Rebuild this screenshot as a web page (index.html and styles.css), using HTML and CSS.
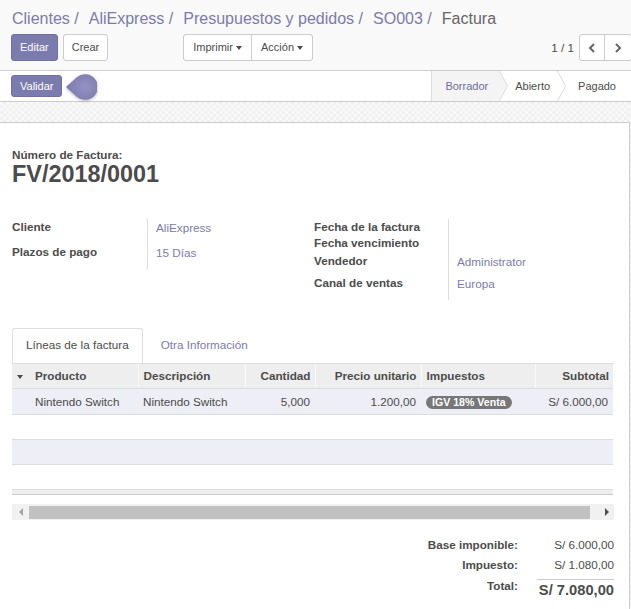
FILE: index.html
```html
<!DOCTYPE html>
<html lang="es">
<head>
<meta charset="utf-8">
<title>Factura</title>
<link rel="stylesheet" href="styles.css">
</head>
<body>
<div class="cp">
  <ol class="crumbs">
    <li><a class="crumb-link">Clientes</a></li><li class="sep">/</li>
    <li><a class="crumb-link">AliExpress</a></li><li class="sep">/</li>
    <li><a class="crumb-link">Presupuestos y pedidos</a></li><li class="sep">/</li>
    <li><a class="crumb-link">SO003</a></li><li class="sep">/</li>
    <li class="crumb-active">Factura</li>
  </ol>
  <div class="cp-row">
    <div class="cp-left">
      <button class="btn btn-primary">Editar</button>
      <button class="btn btn-create">Crear</button>
      <div class="btn-group sidebar">
        <button class="btn">Imprimir<span class="caret"></span></button>
        <button class="btn">Acción<span class="caret"></span></button>
      </div>
    </div>
    <div class="pager">
      <span class="pager-value">1 / 1</span>
      <div class="btn-group">
        <button class="btn pager-btn"><svg width="8" height="10" viewBox="0 0 8 10"><polyline points="6,1 2,5 6,9" fill="none" stroke="#666" stroke-width="2"/></svg></button>
        <button class="btn pager-btn pager-next"><svg width="8" height="10" viewBox="0 0 8 10"><polyline points="2,1 6,5 2,9" fill="none" stroke="#666" stroke-width="2"/></svg></button>
      </div>
    </div>
  </div>
</div>

<div class="statusbar">
  <div class="status-left">
    <button class="btn btn-primary btn-validar">Validar</button>
    <svg class="tip" width="32" height="28" viewBox="0 0 32 28">
      <defs>
        <radialGradient id="tipg" cx="0.6" cy="0.5" r="0.6">
          <stop offset="0" stop-color="#9592c6"/>
          <stop offset="1" stop-color="#7c7bad"/>
        </radialGradient>
      </defs>
      <path d="M1,14 L11.8,4.2 A12.8,12.8 0 1 1 11.8,23.8 Z" fill="url(#tipg)"/>
    </svg>
  </div>
  <div class="steps">
    <div class="step step-current">Borrador</div>
    <svg class="step-sep" width="9" height="30" viewBox="0 0 9 30"><polygon points="0,0 8.5,15 0,30" fill="#f4f4f4"/><polyline points="0.5,0 8.5,15 0.5,30" fill="none" stroke="#dcdcdc" stroke-width="1"/></svg>
    <div class="step step-mid">Abierto</div>
    <svg class="step-sep" width="9" height="30" viewBox="0 0 9 30"><polyline points="0.5,0 8.5,15 0.5,30" fill="none" stroke="#dcdcdc" stroke-width="1"/></svg>
    <div class="step step-last">Pagado</div>
  </div>
</div>

<div class="content">
  <div class="sheet">
    <div class="title-label">Número de Factura:</div>
    <h1 class="title">FV/2018/0001</h1>

    <div class="groups">
      <div class="group group-left">
        <div class="lbl">Cliente</div><div class="val">AliExpress</div>
        <div class="lbl">Plazos de pago</div><div class="val">15 Días</div>
      </div>
      <div class="group group-right">
        <div class="lbl">Fecha de la factura</div><div class="val"></div>
        <div class="lbl">Fecha vencimiento</div><div class="val"></div>
        <div class="lbl">Vendedor</div><div class="val">Administrator</div>
        <div class="lbl">Canal de ventas</div><div class="val">Europa</div>
      </div>
    </div>

    <div class="tabs">
      <div class="tab tab-active">Líneas de la factura</div>
      <div class="tab">Otra Información</div>
    </div>

    <table class="lines">
      <colgroup>
        <col class="c-arrow"><col class="c-prod"><col class="c-desc"><col class="c-qty"><col class="c-price"><col class="c-tax"><col class="c-sub">
      </colgroup>
      <thead>
        <tr>
          <th class="th-arrow"><span class="sort-caret"></span></th>
          <th>Producto</th>
          <th class="sepl">Descripción</th>
          <th class="sepl num">Cantidad</th>
          <th class="sepl num">Precio unitario</th>
          <th class="sepl">Impuestos</th>
          <th class="sepl num">Subtotal</th>
        </tr>
      </thead>
      <tbody>
        <tr class="row-first striped">
          <td></td>
          <td>Nintendo Switch</td>
          <td>Nintendo Switch</td>
          <td class="num">5,000</td>
          <td class="num">1.200,00</td>
          <td><span class="badge">IGV 18% Venta</span></td>
          <td class="num">S/ 6.000,00</td>
        </tr>
        <tr><td colspan="7"></td></tr>
        <tr class="striped"><td colspan="7"></td></tr>
        <tr><td colspan="7"></td></tr>
      </tbody>
      <tfoot>
        <tr><td colspan="7"></td></tr>
      </tfoot>
    </table>

    <div class="hscroll">
      <div class="hs-btn hs-left"><span class="tri-left"></span></div>
      <div class="hs-thumb"></div>
      <div class="hs-space"></div>
      <div class="hs-btn hs-right"><span class="tri-right"></span></div>
    </div>

    <div class="totals">
      <div class="t-lbl">Base imponible:</div><div class="t-val">S/ 6.000,00</div>
      <div class="t-lbl">Impuesto:</div><div class="t-val">S/ 1.080,00</div>
      <div class="t-lbl t-lbl-total">Total:</div><div class="t-val t-total">S/ 7.080,00</div>
    </div>
  </div>
</div>
</body>
</html>
```

FILE: styles.css
```css
html, body {
  margin: 0;
  padding: 0;
}
body {
  font-family: "Liberation Sans", Arial, sans-serif;
  font-size: 11.7px;
  color: #4c4c4c;
  overflow: hidden;
  background-color: #f4f4f4;
  background-image: repeating-conic-gradient(#f1f1f1 0 25%, #f8f8f8 0 50%);
  background-size: 6px 6px;
}

/* control panel */
.cp {
  box-sizing: border-box;
  height: 71px;
  background: #f9f9f9;
  border-bottom: 1px solid #cccccc;
  padding-top: 10px;
}
.crumbs {
  list-style: none;
  margin: 0;
  padding: 0 0 0 12px;
  display: flex;
  font-size: 16px;
  line-height: 18px;
  white-space: nowrap;
}
.crumb-link { color: #7c7bad; }
.sep { color: #7c7bad; padding: 0 10px 0 4.5px; }
.crumb-active { color: #666666; }

.cp-row {
  display: flex;
  justify-content: space-between;
  align-items: center;
  margin-top: 6px;
  padding-left: 11px;
}
.cp-left { display: flex; align-items: center; }

.btn {
  box-sizing: border-box;
  height: 27px;
  font-family: "Liberation Sans", Arial, sans-serif;
  font-size: 11px;
  line-height: 15px;
  padding: 5px 8px;
  margin: 0;
  border: 1px solid #cccccc;
  border-radius: 3px;
  background: #ffffff;
  color: #4c4c4c;
  display: inline-flex;
  align-items: center;
}
.btn-primary {
  background: #7c7bad;
  border-color: #7170a3;
  color: #ffffff;
}
.btn-create { margin-left: 5px; }
.btn-group { display: flex; }
.btn-group .btn { border-radius: 0; }
.btn-group .btn:first-child { border-radius: 3px 0 0 3px; }
.btn-group .btn:last-child { border-radius: 0 3px 3px 0; margin-left: -1px; }
.sidebar { margin-left: 75px; }
.sidebar .btn { padding: 5px 9px; }
.caret {
  display: inline-block;
  width: 0;
  height: 0;
  margin-left: 3px;
  border-top: 4px solid #4c4c4c;
  border-left: 3.5px solid transparent;
  border-right: 3.5px solid transparent;
}

.pager { display: flex; align-items: center; margin-right: -1px; }
.pager-value { margin-right: 5px; font-size: 11.7px; }
.pager-btn { width: 26px; justify-content: center; padding: 0; }
.pager-next { width: 28px; }

/* status bar */
.statusbar {
  box-sizing: border-box;
  height: 31px;
  background: #ffffff;
  border-bottom: 1px solid #cccccc;
  display: flex;
  justify-content: space-between;
  align-items: center;
}
.status-left { display: flex; align-items: center; padding-left: 11px; }
.btn-validar {
  height: 22px;
  line-height: 14px;
  padding: 3px 8px;
}
.tip {
  margin-left: 3px;
  margin-top: 1px;
  filter: drop-shadow(0 1px 1.5px rgba(0, 0, 0, 0.3));
}
.steps {
  align-self: stretch;
  display: flex;
  align-items: stretch;
  border-left: 1px solid #dddddd;
  font-size: 11px;
}
.step { display: flex; align-items: center; color: #4c4c4c; }
.step-current {
  background: #f4f4f4;
  color: #6e6d9a;
  padding: 0 11px 0 13px;
}
.step-mid { padding: 0 7px 0 7px; }
.step-last { padding: 0 15px 0 12px; }
.step-sep { display: block; }

/* content / sheet */
.content { padding-top: 20px; }
.sheet {
  box-sizing: border-box;
  width: 631px;
  min-height: 500px;
  margin-left: -1px;
  background: #ffffff;
  border: 1px solid #cccccc;
  padding: 25px 15px 20px 12px;
}
.title-label {
  font-weight: bold;
  line-height: 14px;
}
.title {
  margin: -1px 0 0;
  font-size: 23.4px;
  line-height: 26px;
  font-weight: bold;
  color: #4c4c4c;
}

.groups {
  margin-top: 32px;
  display: grid;
  grid-template-columns: 302px 1fr;
  align-items: start;
}
.group { display: grid; }
.group-left {
  grid-template-columns: 135px 1fr;
  grid-template-rows: 25px 25px;
}
.group-right {
  grid-template-columns: 134px 1fr;
  grid-template-rows: 16px 18px 22px 25px;
}
.lbl { font-weight: bold; line-height: 16px; white-space: nowrap; }
.val {
  border-left: 1px solid #dddddd;
  padding: 1px 0 0 8px;
  line-height: 16px;
  color: #7c7bad;
}

.tabs {
  margin-top: 28px;
  display: flex;
  border-bottom: 1px solid #dddddd;
}
.tab {
  padding: 8px 13px 10px;
  line-height: 16px;
  border: 1px solid transparent;
  border-bottom: 0;
  color: #7c7bad;
  margin-left: 4px;
}
.tab-active {
  margin-left: 0;
  color: #4c4c4c;
  background: #ffffff;
  border-color: #dddddd;
  border-radius: 3px 3px 0 0;
}

.lines {
  width: 601px;
  table-layout: fixed;
  border-collapse: collapse;
}
.c-arrow { width: 18px; }
.c-prod { width: 108px; }
.c-desc { width: 107px; }
.c-qty { width: 70px; }
.c-price { width: 106px; }
.c-tax { width: 114px; }
.c-sub { width: 78px; }
.lines th {
  height: 24px;
  padding: 0 4px 0 5px;
  background: #eeeeee;
  font-weight: bold;
  text-align: left;
  border-bottom: 1px solid #dddddd;
  line-height: 16px;
  white-space: nowrap;
}
.lines th.sepl { border-left: 1px solid #f9f9f9; }
.lines th.th-arrow { padding: 0 0 0 5px; }
.sort-caret {
  display: inline-block;
  width: 0;
  height: 0;
  vertical-align: middle;
  border-top: 4px solid #4c4c4c;
  border-left: 3.5px solid transparent;
  border-right: 3.5px solid transparent;
}
.lines td {
  height: 24px;
  padding: 0 5px;
  line-height: 16px;
  border-bottom: 1px solid #dddddd;
  white-space: nowrap;
}
.lines .row-first td { height: 25px; }
.lines .num { text-align: right; }
.lines tbody td.num { padding-right: 5px; }
.lines th.num { padding-right: 4px; }
.striped td { background: #eeeef6; }
.lines tfoot td {
  height: 4px;
  padding: 0;
  background: #eeeeee;
  border-bottom: 1px solid #cccccc;
}
.badge {
  display: inline-block;
  background: #777777;
  color: #ffffff;
  font-weight: bold;
  font-size: 10.6px;
  line-height: 13px;
  padding: 0 6px;
  border-radius: 7px;
  vertical-align: middle;
}

/* horizontal scrollbar */
.hscroll {
  margin-top: 9px;
  height: 16px;
  width: 602px;
  background: #f1f1f1;
  display: flex;
}
.hs-btn { display: flex; align-items: center; justify-content: center; }
.hs-left { width: 17px; }
.hs-right { width: 15px; }
.hs-thumb {
  width: 561px;
  height: 13px;
  margin-top: 2px;
  background: #c1c1c1;
}
.hs-space { flex: 1; }
.tri-left {
  width: 0; height: 0;
  border-right: 4px solid #a3a3a3;
  border-top: 4px solid transparent;
  border-bottom: 4px solid transparent;
}
.tri-right {
  width: 0; height: 0;
  border-left: 4px solid #505050;
  border-top: 4px solid transparent;
  border-bottom: 4px solid transparent;
}

/* totals */
.totals {
  margin-top: 17px;
  display: grid;
  grid-template-columns: 1fr 77px;
  column-gap: 19px;
  row-gap: 4px;
  align-items: start;
}
.t-lbl { text-align: right; font-weight: bold; line-height: 16px; }
.t-val { text-align: right; line-height: 16px; }
.t-lbl-total { margin-top: 1px; }
.t-total {
  margin-top: 2px;
  border-top: 1px solid #cccccc;
  font-weight: bold;
  font-size: 14.7px;
  line-height: 20px;
}
```
